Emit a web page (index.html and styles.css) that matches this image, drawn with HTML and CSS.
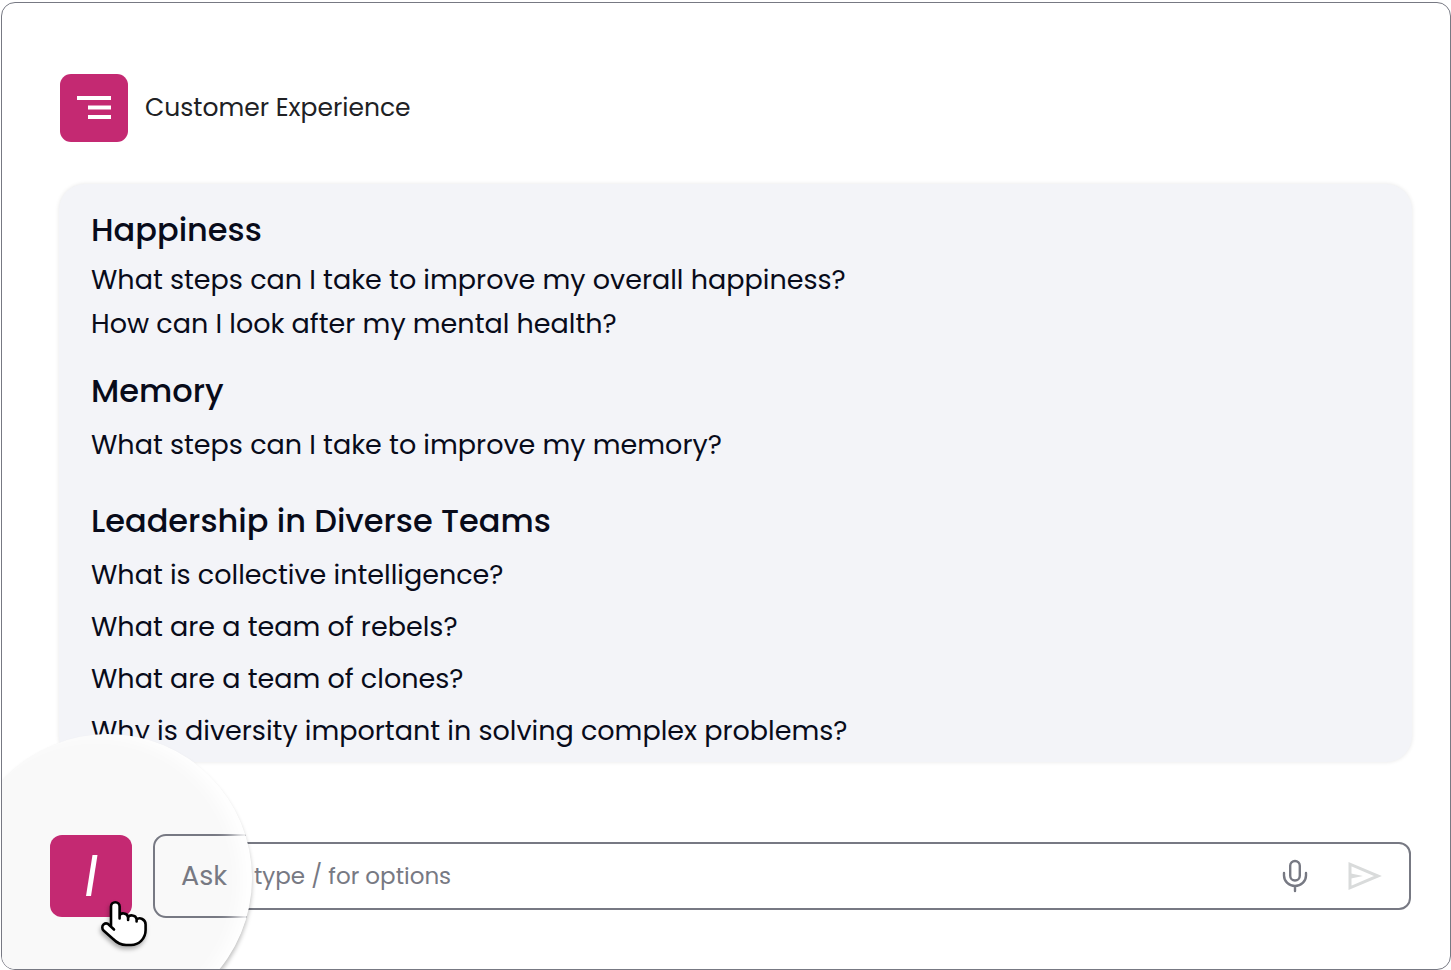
FILE: index.html
```html
<!DOCTYPE html>
<html lang="en">
<head>
    <meta charset="UTF-8">
    <meta name="viewport" content="width=device-width, initial-scale=1.0">
    <title>Customer Experience</title>
    <link rel="stylesheet" href="styles.css">
</head>
<body>
    <div class="window">
        <header class="header">
            <button class="menu-button" type="button" aria-label="Menu">
                <svg width="68" height="68" viewBox="0 0 68 68" fill="#fff">
                    <path d="M17 22h34v4H17zM28 31.500h23v4H28zM28 41h23v4H28z"/>
                </svg>
            </button>
            <h1>Customer Experience</h1>
        </header>

        <main class="panel">
            <section>
                <h2>Happiness</h2>
                <ul class="questions compact">
                    <li>What steps can I take to improve my overall happiness?</li>
                    <li>How can I look after my mental health?</li>
                </ul>
            </section>
            <section>
                <h2>Memory</h2>
                <ul class="questions">
                    <li>What steps can I take to improve my memory?</li>
                </ul>
            </section>
            <section>
                <h2>Leadership in Diverse Teams</h2>
                <ul class="questions">
                    <li>What is collective intelligence?</li>
                    <li>What are a team of rebels?</li>
                    <li>What are a team of clones?</li>
                    <li>Why is diversity important in solving complex problems?</li>
                </ul>
            </section>
        </main>

        <form class="ask-bar">
            <input id="question" type="text" placeholder="type / for options">
            <button class="icon-button" type="button" aria-label="Speak">
                <svg width="26" height="34" viewBox="0 0 26 34" fill="none" stroke="#777983" stroke-width="2.400" stroke-linecap="round">
                    <rect x="8.200" y="2" width="9.600" height="19.500" rx="4.800"/>
                    <path d="M2 14v2.500a11 10.500 0 0 0 22 0V14M13 27.500V32"/>
                </svg>
            </button>
            <button class="icon-button" type="submit" aria-label="Send">
                <svg width="34" height="30" viewBox="0 0 34 30" fill="none" stroke="#d9dbdb" stroke-width="3">
                    <path d="M2 3.200v23.600L30 15z"/>
                    <path d="M3 12.500L15 15L3 17.500z" fill="#d9dbdb" stroke="none"/>
                </svg>
            </button>
        </form>

        <!-- magnified corner of the ask bar -->
        <div class="lens">
            <button class="slash-button" type="button" aria-label="Options">
                <svg width="82" height="82" viewBox="0 0 82 82">
                    <path d="M42.500 20h5L41 61h-5z" fill="#fff"/>
                </svg>
            </button>
            <label class="lens-field" for="question">Ask</label>
            <svg class="cursor" width="50" height="50" viewBox="0 0 50 50">
                <path d="M11 29.500V6.500a4.300 4.300 0 0 1 8.600 0V15c1.500-3 6.500-2.500 7.500 1 2-2.600 7-2 8 1.500 2-2.500 6.500-2 8 1 1.600 1 2.400 2.500 2.400 5.500V30c0 9-7 15-14.500 15h-5c-5 0-9-2-13-6L3.500 30.500c-1.500-1.700-1.700-4.500 0-6 2-1.600 4.500-.8 6 .8l5 4.700" fill="#fff"/>
                <path d="M11 26V6.500a4.300 4.300 0 0 1 8.600 0V18.500M19.600 15.500c1-3 8-3 8.500 2v2.500M28.100 17.500c1-3 7.500-3 8.500 1.500v2.500M36.600 19.500c3-3 9 0 9 5V30c0 9-7 15-14.500 15h-5c-5 0-9-2-13-6L3.500 30.500c-1.500-1.700-1.700-4.500 0-6 2-1.600 4.500-.8 6 .8l4.500 4.200" fill="none" stroke="#000" stroke-width="2.600" stroke-linecap="round" stroke-linejoin="round"/>
            </svg>
        </div>
    </div>
</body>
</html>
```
FILE: styles.css
```css
* {
    margin: 0;
    padding: 0;
    box-sizing: border-box;
}

body {
    min-height: 100vh;
    padding: 2px 0 0 1px;
    display: flex;
    background: #fff;
    color: #080b1a;
    font-family: Poppins, Inter, "Liberation Sans", sans-serif;
}

button {
    border: none;
    background: none;
    cursor: pointer;
}

svg {
    display: block;
}

.window {
    position: relative;
    flex: 1;
    display: flex;
    flex-direction: column;
    padding: 71px 38px 59px 57px;
    border: 1px solid #777983;
    border-radius: 14px;
    overflow: hidden;
}

.header {
    display: flex;
    align-items: center;
    gap: 17px;
    margin-bottom: 42px;
    padding-left: 1px;
}

.menu-button {
    background: #c42972;
    border-radius: 11px;
}

.header h1 {
    color: #202124;
    font-size: 25px;
    font-weight: 400;
}

.panel {
    flex: 1;
    display: flex;
    flex-direction: column;
    gap: 21px;
    padding: 22px 32px 0;
    background: #f3f4f8;
    border-radius: 26px;
    box-shadow: 0 0 4px rgba(0, 0, 0, 0.1);
}

.panel h2 {
    margin-bottom: 4px;
    font-size: 32px;
    font-weight: 500;
    line-height: 48px;
}

.questions {
    padding-bottom: 5px;
    list-style: none;
    font-size: 27px;
    line-height: 52px;
}

.questions.compact {
    padding-bottom: 0;
    line-height: 44px;
}

.ask-bar {
    display: flex;
    align-items: center;
    gap: 40px;
    height: 68px;
    margin: 80px 1px 0 100px;
    padding: 0 27px 0 93px;
    border: 2px solid #777983;
    border-radius: 12px;
}

.ask-bar input {
    flex: 1;
    min-width: 0;
    border: none;
    outline: none;
    background: none;
    color: #777983;
    font-family: inherit;
    font-size: 23px;
}

.ask-bar input::placeholder {
    color: #777983;
}

.lens {
    position: absolute;
    left: -38px;
    bottom: -53px;
    width: 288px;
    height: 288px;
    display: flex;
    align-items: center;
    gap: 21px;
    padding: 0 0 4px 86px;
    background: #f9f9f9;
    border-radius: 50%;
    box-shadow: 0 4px 4px rgba(0, 0, 0, 0.25);
    overflow: hidden;
}

/* white glow along the glass edge, over the field */
.lens::after {
    content: "";
    position: absolute;
    inset: 0;
    border-radius: 50%;
    box-shadow: inset -12px 2px 18px -2px #fff;
    pointer-events: none;
}

.slash-button {
    flex: none;
    background: #c42972;
    border-radius: 12px;
}

.lens-field {
    flex: none;
    width: 160px;
    padding-left: 26px;
    border: 2px solid #777983;
    border-radius: 13px;
    color: #777983;
    font-size: 27px;
    line-height: 80px;
}

.cursor {
    position: absolute;
    left: 136px;
    top: 166px;
    filter: drop-shadow(-1px 3px 2px rgba(0, 0, 0, 0.3));
}
```
